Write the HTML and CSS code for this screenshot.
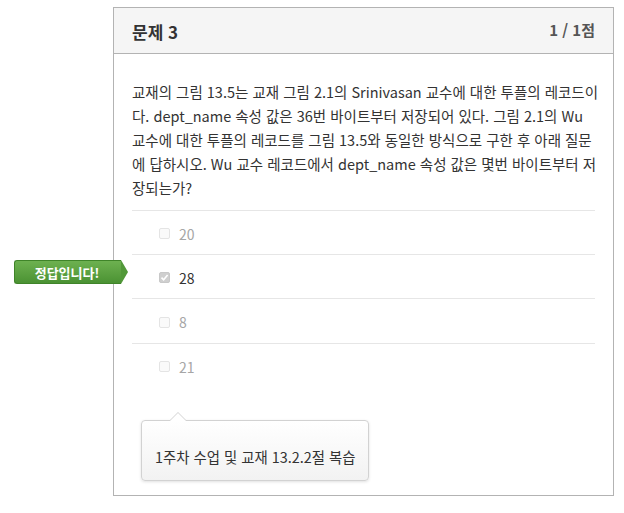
FILE: index.html
```html
<!DOCTYPE html>
<html lang="ko">
<head>
  <meta charset="UTF-8" />
  <title>문제 3</title>
  <link rel="stylesheet" href="styles.css">
</head>
<body>
  <div class="question">
    <div class="q-head">
      <h2 class="q-title">문제 3</h2>
      <span class="q-score">1 / 1점</span>
    </div>

    <div class="q-body">
      <p class="q-text">교재의 그림 13.5는 교재 그림 2.1의 Srinivasan 교수에 대한 투플의 레코드이다. dept_name 속성 값은 36번 바이트부터 저장되어 있다. 그림 2.1의 Wu 교수에 대한 투플의 레코드를 그림 13.5와 동일한 방식으로 구한 후 아래 질문에 답하시오. Wu 교수 레코드에서 dept_name 속성 값은 몇번 바이트부터 저장되는가?</p>

      <ul class="answers">
        <li class="answer"><span class="box"></span>20</li>
        <li class="answer selected">
          <span class="correct-tag">정답입니다!</span>
          <span class="box checked">
            <svg width="9" height="9" viewBox="0 0 9 9"><path d="M1.5 4.6 L3.6 6.7 L7.6 2" fill="none" stroke="#fff" stroke-width="1.6"/></svg>
          </span>28
        </li>
        <li class="answer"><span class="box"></span>8</li>
        <li class="answer"><span class="box"></span>21</li>
      </ul>

      <div class="feedback">1주차 수업 및 교재 13.2.2절 복습</div>
    </div>
  </div>
</body>
</html>
```

FILE: styles.css
```css
/* ── Quiz question card ─────────────────────── */
* { box-sizing: border-box; }
body {
  margin: 0;
  background: #fff;
  color: #333;
  font-family: "Noto Sans CJK KR", "Noto Sans", sans-serif;
}

.question {
  width: 501px;
  margin: 7px 0 0 113px;
  border: 1px solid #b3b3b3;
}

.q-head {
  display: flex;
  justify-content: space-between;
  align-items: center;
  height: 46px;
  padding: 0 18px;
  background: #f5f5f5;
  border-bottom: 1px solid #b3b3b3;
}
.q-title {
  margin: 2px 0 0;
  font-size: 17px;
  font-weight: bold;
  color: #333;
}
.q-score {
  margin-top: -2px;
  font-size: 15px;
  font-weight: bold;
  color: #555;
}

.q-body {
  padding: 26px 18px 14px;
}
.q-text {
  margin: 0 -4px 10px 0;
  font-size: 14.5px;
  line-height: 24px;
  color: #333;
}

/* ── Answer options ─────────────────────────── */
.answers {
  list-style: none;
  margin: 0;
  padding: 0;
}
.answer {
  position: relative;
  display: flex;
  align-items: center;
  height: 44px;
  padding: 2px 0 0 27px;
  border-top: 1px solid #e6e6e6;
  font-size: 14px;
  color: #a6a6a6;
}
.answer:nth-child(3) { height: 45px; }
.answer.selected { color: #333; }

.box {
  display: inline-flex;
  align-items: center;
  justify-content: center;
  width: 11px;
  height: 11px;
  margin-right: 9px;
  border: 1px solid #e4e4e4;
  border-radius: 2px;
  background: #fafafa;
}
.box.checked {
  border-color: #c8c8c8;
  background: #cfcfcf;
}

.correct-tag {
  position: absolute;
  left: -118px;
  top: 5px;
  width: 107px;
  height: 24px;
  line-height: 24px;
  padding-right: 2px;
  text-align: center;
  font-size: 13px;
  font-weight: bold;
  color: #fff;
  background: linear-gradient(#6db150, #4b9233);
  border: 1px solid #3f8429;
  border-right: none;
  border-radius: 3px 0 0 3px;
}
.correct-tag::after {
  content: "";
  position: absolute;
  right: -7px;
  top: -1px;
  border-top: 12px solid transparent;
  border-bottom: 12px solid transparent;
  border-left: 7px solid #529839;
}

/* ── Feedback bubble ────────────────────────── */
.feedback {
  position: relative;
  width: 228px;
  margin: 33px 0 0 9px;
  padding: 24px 0 11px 13px;
  font-size: 14.4px;
  line-height: 24px;
  color: #333;
  background: linear-gradient(#fff, #f2f2f2);
  border: 1px solid #d2d2d2;
  border-radius: 4px;
  box-shadow: 0 1px 3px rgba(0,0,0,.12);
}
.feedback::before,
.feedback::after {
  content: "";
  position: absolute;
  left: 28px;
  width: 0;
  height: 0;
  border-left: 8px solid transparent;
  border-right: 8px solid transparent;
}
.feedback::before {
  top: -9px;
  border-bottom: 8px solid #d2d2d2;
}
.feedback::after {
  top: -8px;
  border-bottom: 8px solid #fff;
}
```
